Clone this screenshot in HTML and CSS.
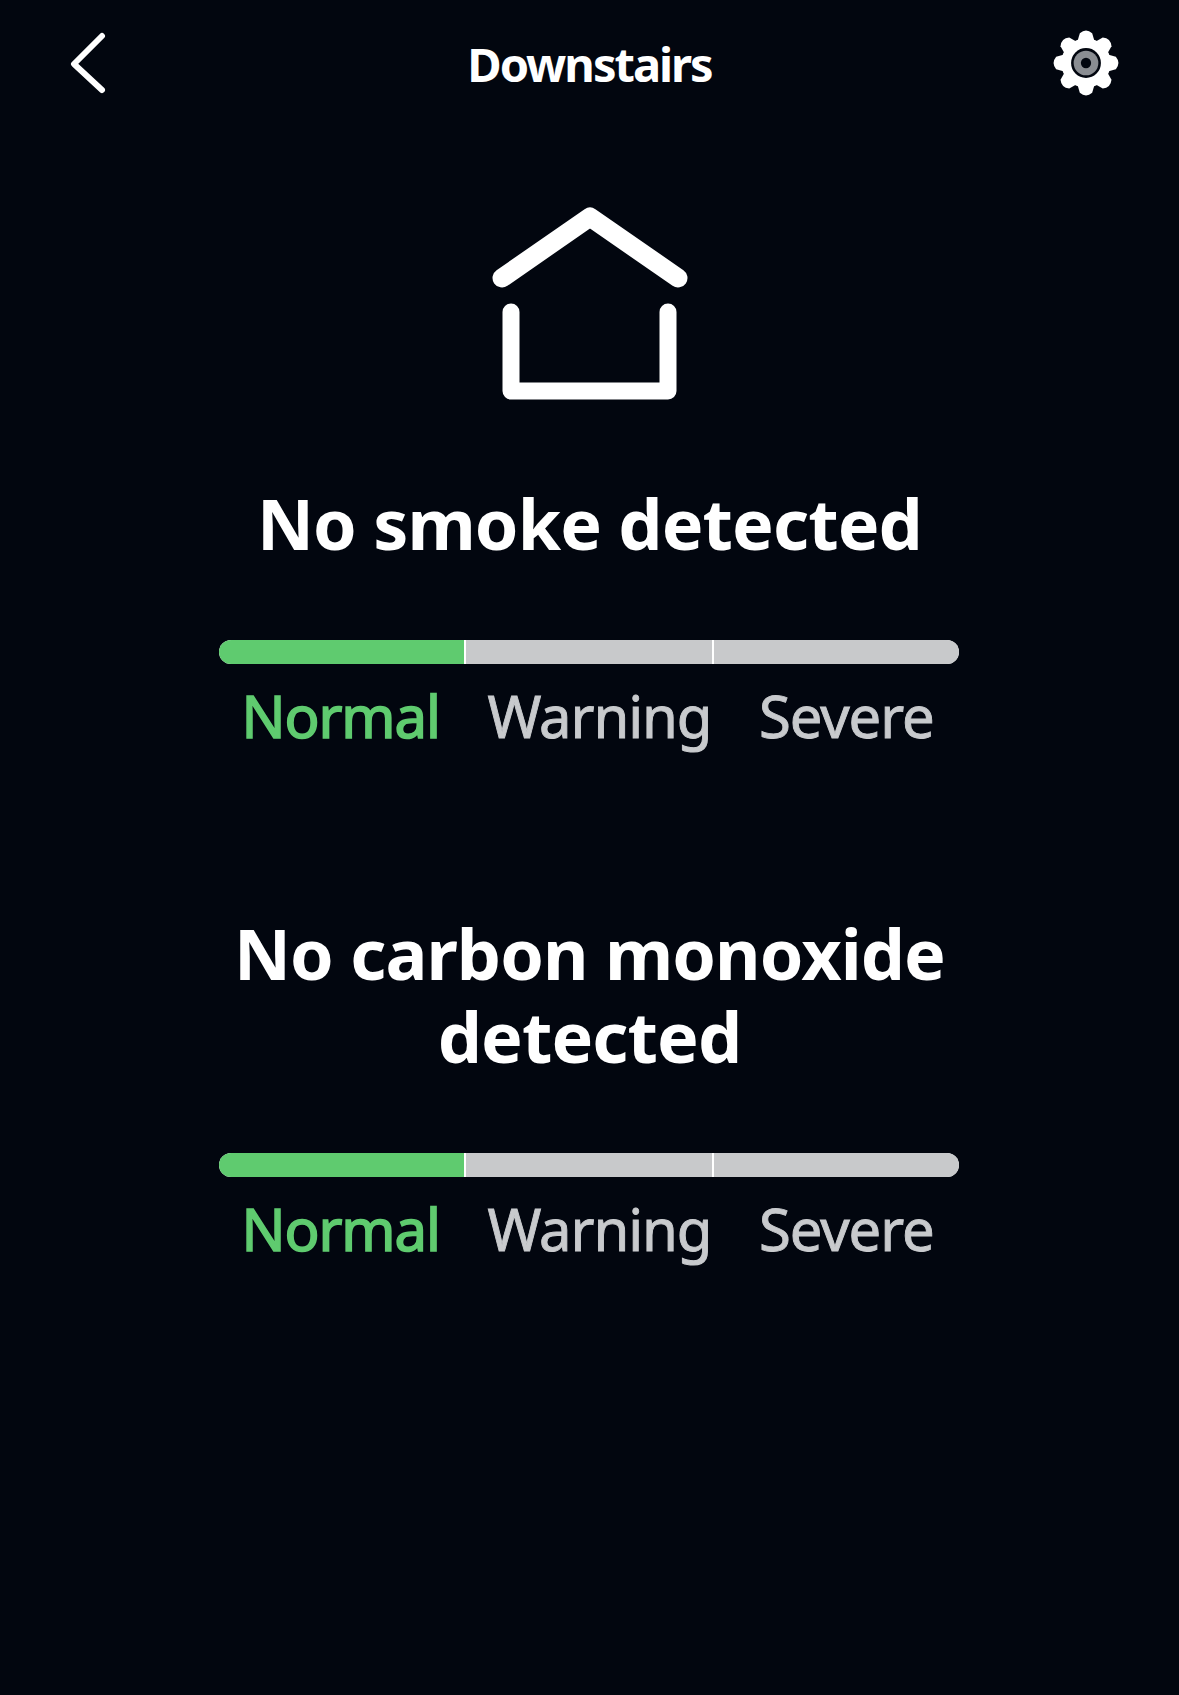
FILE: index.html
```html
<!DOCTYPE html>
<html lang="en">
<head>
<meta charset="utf-8">
<title>Downstairs</title>
<link rel="stylesheet" href="styles.css">
</head>
<body>
<main class="screen">
  <header class="topbar">
    <svg class="icon-back" width="40" height="70" viewBox="0 0 40 70"><path d="M32 8 L4 36 L32 62" fill="none" stroke="#fff" stroke-width="6" stroke-linecap="round" stroke-linejoin="round"/></svg>
    <h1 class="title">Downstairs</h1>
    <svg class="icon-gear" width="70" height="70" viewBox="-34 -34 68 68">
      <g fill="#fff">
        <circle r="24"/>
        <g id="t"><path d="M-8 -22 L-6 -29 Q0 -34 6 -29 L8 -22 Z"/></g>
        <use href="#t" transform="rotate(45)"/><use href="#t" transform="rotate(90)"/><use href="#t" transform="rotate(135)"/><use href="#t" transform="rotate(180)"/><use href="#t" transform="rotate(225)"/><use href="#t" transform="rotate(270)"/><use href="#t" transform="rotate(315)"/>
      </g>
      <circle r="14.5" fill="#02060f"/><circle r="12" fill="#8a8d92"/><circle r="5" fill="#02060f"/>
    </svg>
  </header>
  <svg class="icon-house" width="200" height="210" viewBox="0 0 200 210"><g fill="none" stroke="#fff" stroke-linecap="round" stroke-linejoin="round"><path stroke-width="19" d="M12 83 L100 22 L188 83"/><path stroke-width="17" d="M21 117 V196 H178 V117"/></g></svg>
  <section class="status">
    <h2 class="heading">No smoke detected</h2>
    <div class="bar"><div class="seg seg-on"></div><div class="seg"></div><div class="seg"></div></div>
    <div class="labels"><span class="label label-on">Normal</span><span class="label">Warning</span><span class="label">Severe</span></div>
  </section>
  <section class="status status-co">
    <h2 class="heading">No carbon monoxide<br>detected</h2>
    <div class="bar"><div class="seg seg-on"></div><div class="seg"></div><div class="seg"></div></div>
    <div class="labels"><span class="label label-on">Normal</span><span class="label">Warning</span><span class="label">Severe</span></div>
  </section>
</main>
</body>
</html>
```
FILE: styles.css
```css
* { box-sizing: border-box; }
html, body { margin: 0; padding: 0; }
body { background: #02060f; color: #fff; font-family: "Noto Sans", "Open Sans", sans-serif; }
.screen { width: 1179px; height: 1695px; display: flex; flex-direction: column; align-items: center; overflow: hidden; }
.topbar { width: 100%; height: 130px; padding: 28px 58px 0 70px; display: flex; justify-content: space-between; align-items: flex-start; position: relative; }
.title { margin: 0; position: absolute; left: 0; right: 0; top: 36px; text-align: center; font-size: 47px; line-height: 56px; font-weight: 700; letter-spacing: -2px; }
.icon-house { margin-top: 65px; flex: none; }
.status { display: flex; flex-direction: column; align-items: center; margin-top: 77px; width: 740px; }
.status-co { margin-top: 161px; }
.heading { margin: 0; font-size: 70px; line-height: 83px; font-weight: 700; text-align: center; white-space: nowrap; letter-spacing: -0.9px; }
.bar { width: 740px; height: 24px; margin: 75px 1px 0 0; display: flex; border-radius: 12px; overflow: hidden; gap: 2px; background: #fff; flex: none; }
.seg { flex: 1; background: #c8c9cb; }
.seg-on { background: #5fcb6f; }
.labels { width: 100%; display: flex; padding: 0 26px 0 22px; justify-content: space-between; margin-top: 17px; }
.label { font-size: 58px; line-height: 70px; letter-spacing: -1.1px; color: #c8cacd; -webkit-text-stroke: 0.9px currentColor; }
.label-on { color: #5fcb6f; -webkit-text-stroke-width: 1.6px; }
```
